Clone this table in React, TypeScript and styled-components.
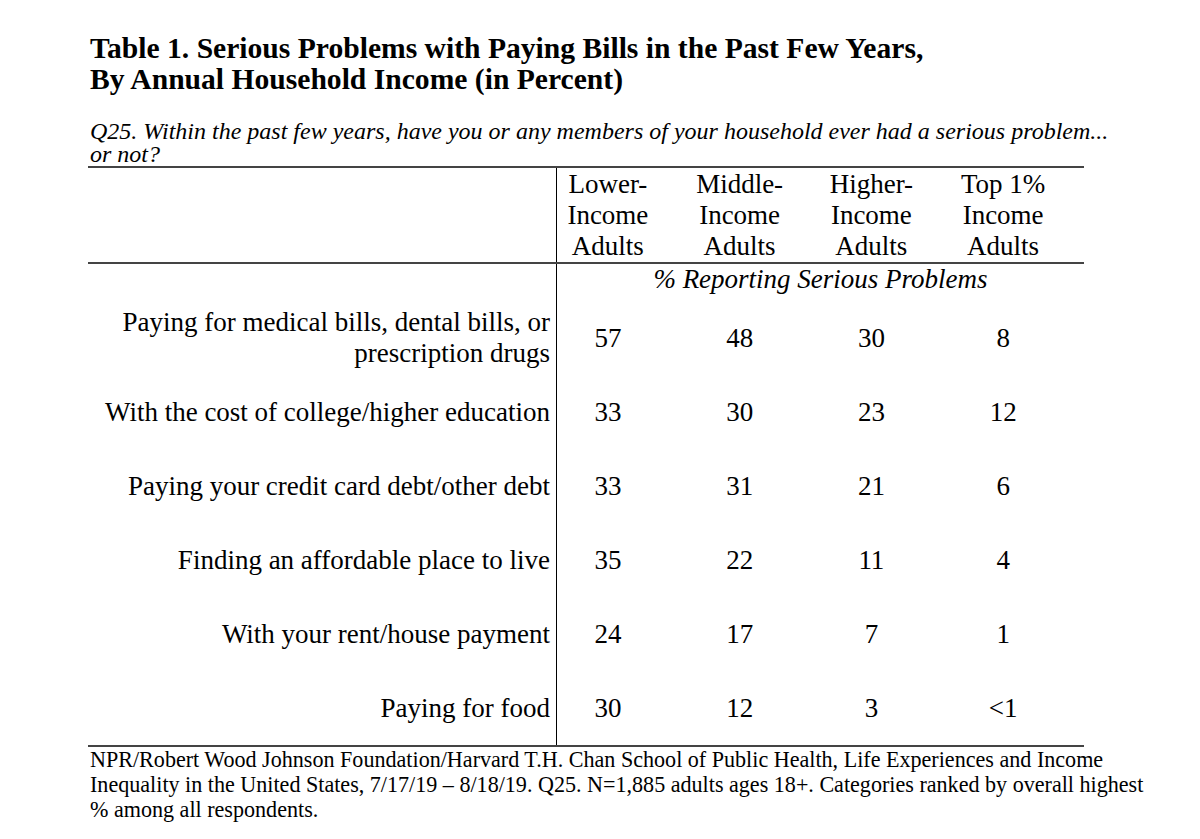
import React from 'react';
import styled, { createGlobalStyle } from 'styled-components';

const GlobalStyle = createGlobalStyle`
  html, body {
    margin: 0;
    padding: 0;
    background: #ffffff;
  }
  body {
    font-family: "Liberation Serif", "Times New Roman", serif;
    color: #000;
  }
`;

const Page = styled.div`
  width: 1100px;
  padding: 33px 0 0 88px;
`;

const Title = styled.h1`
  margin: 0 0 0 2px;
  font-size: 29.6px;
  line-height: 31px;
  font-weight: 700;
`;

const Question = styled.p`
  margin: 25px 0 0 2px;
  font-size: 24px;
  line-height: 23px;
  font-style: italic;
`;

const Table = styled.div`
  width: 996px;
  border-top: 2px solid #444;
  border-bottom: 2px solid #444;
`;

const Row = styled.div<{ $height?: number; $rule?: boolean }>`
  display: grid;
  grid-template-columns: 469px repeat(4, 1fr);
  height: ${(p) => (p.$height ? `${p.$height}px` : 'auto')};
  border-bottom: ${(p) => (p.$rule ? '2px solid #444' : 'none')};
  font-size: 27px;
  line-height: 31px;
`;

const Label = styled.div`
  border-right: 1px solid #000;
  padding-right: 6px;
  text-align: right;
  display: flex;
  align-items: center;
  justify-content: flex-end;
`;

const HeadCell = styled.div`
  text-align: center;
  padding: 1px 30px 0 0;
`;

const Value = styled.div`
  display: flex;
  align-items: center;
  justify-content: center;
  padding-right: 30px;
`;

const Reporting = styled.div`
  grid-column: 2 / 6;
  text-align: center;
  font-style: italic;
`;

const Footer = styled.p`
  margin: 0 0 0 2px;
  font-size: 22.1px;
  line-height: 25px;
`;

const headers = [
  ['Lower-', 'Income', 'Adults'],
  ['Middle-', 'Income', 'Adults'],
  ['Higher-', 'Income', 'Adults'],
  ['Top 1%', 'Income', 'Adults'],
];

const rows: { label: React.ReactNode; values: string[] }[] = [
  {
    label: (
      <>
        Paying for medical bills, dental bills, or
        <br />
        prescription drugs
      </>
    ),
    values: ['57', '48', '30', '8'],
  },
  { label: 'With the cost of college/higher education', values: ['33', '30', '23', '12'] },
  { label: 'Paying your credit card debt/other debt', values: ['33', '31', '21', '6'] },
  { label: 'Finding an affordable place to live', values: ['35', '22', '11', '4'] },
  { label: 'With your rent/house payment', values: ['24', '17', '7', '1'] },
  { label: 'Paying for food', values: ['30', '12', '3', '<1'] },
];

const App: React.FunctionComponent = () => (
  <Page>
    <GlobalStyle />
    <Title>
      Table 1. Serious Problems with Paying Bills in the Past Few Years,
      <br />
      By Annual Household Income (in Percent)
    </Title>
    <Question>
      Q25. Within the past few years, have you or any members of your household ever had a serious problem...
      <br />
      or not?
    </Question>
    <Table>
      <Row $rule>
        <Label />
        {headers.map((h) => (
          <HeadCell key={h[0]}>
            {h[0]}
            <br />
            {h[1]}
            <br />
            {h[2]}
          </HeadCell>
        ))}
      </Row>
      <Row $height={37}>
        <Label />
        <Reporting>% Reporting Serious Problems</Reporting>
      </Row>
      {rows.map((r, i) => (
        <Row key={i} $height={74}>
          <Label>{r.label}</Label>
          {r.values.map((v, j) => (
            <Value key={j}>{v}</Value>
          ))}
        </Row>
      ))}
    </Table>
    <Footer>
      NPR/Robert Wood Johnson Foundation/Harvard T.H. Chan School of Public Health, Life Experiences and Income
      <br />
      Inequality in the United States, 7/17/19 – 8/18/19. Q25. N=1,885 adults ages 18+. Categories ranked by overall highest
      <br />
      % among all respondents.
    </Footer>
  </Page>
);

export default App;
